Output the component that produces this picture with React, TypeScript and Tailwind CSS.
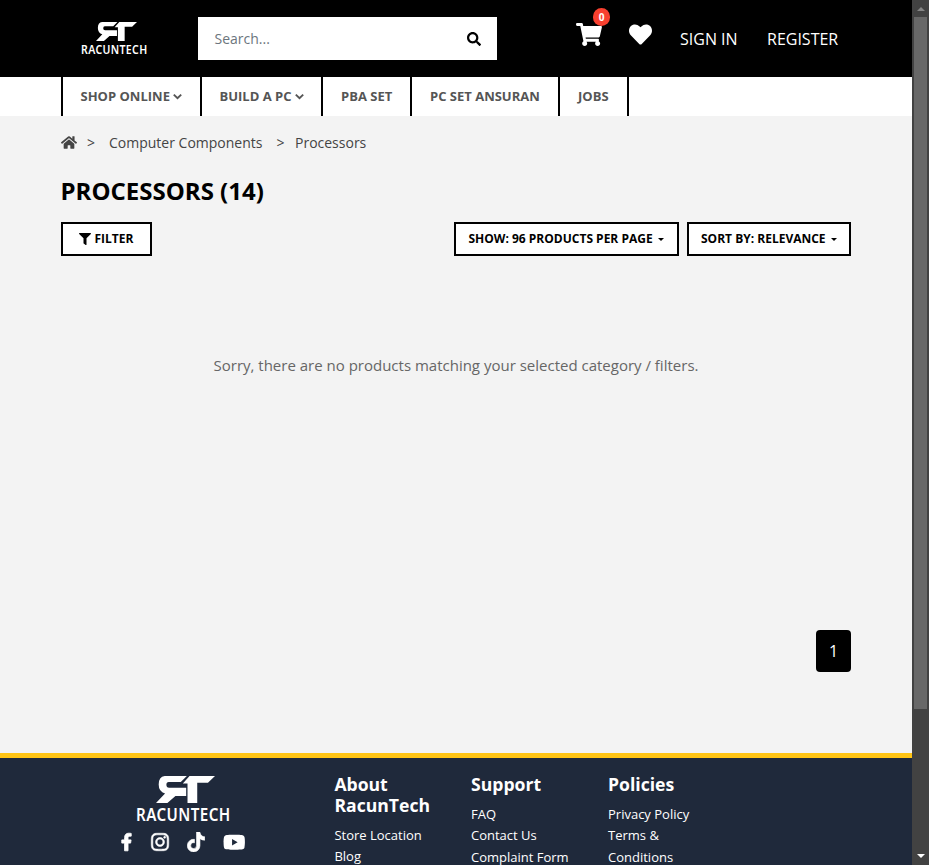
import React from "react";
import {
  FaShoppingCart, FaHeart, FaSearch, FaHome, FaFilter, FaFacebookF,
  FaInstagram, FaTiktok, FaYoutube,
} from "react-icons/fa";

function Mark({ className }: { className: string }) {
  return (
    <svg viewBox="0 0 176 80" preserveAspectRatio="none" className={className} fill="#fff">
      <path d="M26 0H92L74 18H38Q31 18 31 26Q31 35 39 35H90V59H58L34 80H0L27 52Q8 46 8 25Q8 2 26 0Z" />
      <path d="M100 0H176L155 20H123V80H94V22H80Z" />
    </svg>
  );
}

function NavItem({ label, width, arrow }: { label: string; width: string; arrow?: boolean }) {
  return (
    <div className={`flex h-[39px] items-center border-r-2 border-black text-[13px] font-bold text-[#555] whitespace-nowrap ${width} ${arrow ? "pl-[17.5px]" : "pl-[18px]"}`}>
      {label}
      {arrow && (
        <svg viewBox="0 0 9 9" className="ml-[3px] size-[9px]" fill="none" stroke="currentColor" strokeWidth="1.9">
          <path d="M0.8 2.6L4.5 6.2L8.2 2.6" />
        </svg>
      )}
    </div>
  );
}

function Select({ label, className }: { label: string; className: string }) {
  return (
    <button className={`flex h-[34px] items-center border-2 border-black bg-white text-[12px] font-bold whitespace-nowrap ${className}`}>
      {label}
      <span className="ml-[5.5px] border-x-[3px] border-t-[3px] border-x-transparent border-t-black" />
    </button>
  );
}

function FooterColumn({ title, links, className }: { title: React.ReactNode; links: string[]; className: string }) {
  return (
    <div className={`shrink-0 text-[13px] leading-[21.3px] text-white ${className}`}>
      <h4 className="mb-[9px] text-[17.6px] font-bold leading-[21px]">{title}</h4>
      {links.map((l) => <div key={l} className="whitespace-nowrap">{l}</div>)}
    </div>
  );
}

export default function App() {
  return (
    <div className="flex h-[865px] w-[929px] overflow-hidden bg-[#f3f3f3] font-['Open_Sans',sans-serif] text-black">
      <div className="flex w-[912px] shrink-0 flex-col">
        <header className="flex h-[77px] shrink-0 bg-black text-white">
          <div className="ml-[81px] flex w-[117px] shrink-0 flex-col pt-[22px]">
            <Mark className="ml-[15px] h-[19px] w-[41px]" />
            <span className="mt-[3px] w-fit origin-left scale-x-[0.88] font-['Noto_Sans',sans-serif] text-[12px] font-semibold leading-[12px] tracking-[0.4px]">RACUNTECH</span>
          </div>
          <div className="mt-[17px] flex h-[43px] w-[299px] shrink-0 items-center justify-between bg-white pl-[16.5px] pr-4 text-[14px] text-[#6c757d]">
            Search...
            <FaSearch className="size-[14px] text-black" />
          </div>
          <div className="relative ml-[79px] mt-[23px] h-[23px] w-[26px] shrink-0">
            <FaShoppingCart className="h-[23px] w-[26px]" />
            <span className="absolute -top-[15px] left-[17px] flex h-[18px] w-[17px] items-center justify-center rounded-full bg-[#f8402f] text-[10px] font-bold">0</span>
          </div>
          <FaHeart className="ml-[26.5px] mt-[23px] size-[23px] shrink-0" />
          <span className="ml-[28.5px] mt-[27px] w-[87px] shrink-0 text-[16px] leading-6">SIGN IN</span>
          <span className="mt-[27px] text-[16px] leading-6">REGISTER</span>
        </header>
        <nav className="flex h-[39px] shrink-0 bg-white pl-[61px]">
          <div className="w-[2px] bg-black" />
          <NavItem label="SHOP ONLINE" width="w-[139px]" arrow />
          <NavItem label="BUILD A PC" width="w-[121px]" arrow />
          <NavItem label="PBA SET" width="w-[89px]" />
          <NavItem label="PC SET ANSURAN" width="w-[148px]" />
          <NavItem label="JOBS" width="w-[69px]" />
        </nav>
        <main className="flex h-[637px] shrink-0 flex-col pl-[61px] pr-[61px]">
          <div className="mt-[15px] flex h-[22px] items-center text-[14px] text-[#444]">
            <FaHome className="h-[15px] w-[16px]" />
            <span className="ml-[10px]">&gt;</span>
            <span className="ml-[14px]">Computer Components</span>
            <span className="ml-[14px]">&gt;</span>
            <span className="ml-[10.5px]">Processors</span>
          </div>
          <h1 className="-ml-[0.5px] mt-[23px] text-[24px] font-bold leading-[30px]">PROCESSORS (14)</h1>
          <div className="mt-4 flex h-[34px]">
            <button className="flex w-[91px] items-center border-2 border-black bg-white pl-4 text-[12px] font-bold">
              <FaFilter className="mr-[3.5px] size-[12px]" />FILTER
            </button>
            <Select label="SHOW: 96 PRODUCTS PER PAGE" className="ml-auto w-[225px] pl-[12.5px]" />
            <Select label="SORT BY: RELEVANCE" className="ml-2 w-[164px] pl-3" />
          </div>
          <p className="mt-[97px] text-center text-[15px] leading-6 text-[#666]">Sorry, there are no products matching your selected category / filters.</p>
          <div className="mt-[253px] flex h-[42px] w-[35px] items-center justify-center self-end rounded bg-black text-[16px] text-white">1</div>
        </main>
        <footer className="flex h-[112px] overflow-hidden border-t-[5px] border-[#ffc414] bg-[#1f293b] text-white">
          <div className="ml-[121px] w-[213px] shrink-0 pt-[18px]">
            <Mark className="ml-[35px] h-[27px] w-[59px]" />
            <div className="ml-[14.5px] mt-[4px] w-fit origin-left scale-x-[0.89] font-['Noto_Sans',sans-serif] text-[17px] font-semibold leading-[16px] tracking-[0.5px]">RACUNTECH</div>
            <div className="mt-[9px] flex h-5 items-center">
              <FaFacebookF className="h-[20px] w-[11px]" strokeWidth="25" stroke="currentColor" />
              <FaInstagram className="ml-[18px] size-5" strokeWidth="15" stroke="currentColor" />
              <FaTiktok className="ml-[17px] h-[20px] w-[18px]" strokeWidth="15" stroke="currentColor" />
              <FaYoutube className="ml-[18px] size-[22.5px]" />
            </div>
          </div>
          <FooterColumn title={<>About<br />RacunTech</>} links={["Store Location", "Blog"]} className="w-[137px] pt-4 pl-[0.4px]" />
          <FooterColumn title="Support" links={["FAQ", "Contact Us", "Complaint Form"]} className="w-[137px] pt-4" />
          <FooterColumn title="Policies" links={["Privacy Policy", "Terms &", "Conditions"]} className="w-[137px] pt-4" />
        </footer>
      </div>
      <div className="flex w-[17px] shrink-0 flex-col items-center bg-[#424242]">
        <div className="mt-[7px] h-[4px] border-x-[4px] border-b-[4px] border-x-transparent border-b-[#868686]" />
        <div className="mt-[6px] h-[692px] w-[13px] bg-[#686868]" />
        <div className="mt-auto mb-[7px] border-x-[4px] border-t-[4px] border-x-transparent border-t-white" />
      </div>
    </div>
  );
}
